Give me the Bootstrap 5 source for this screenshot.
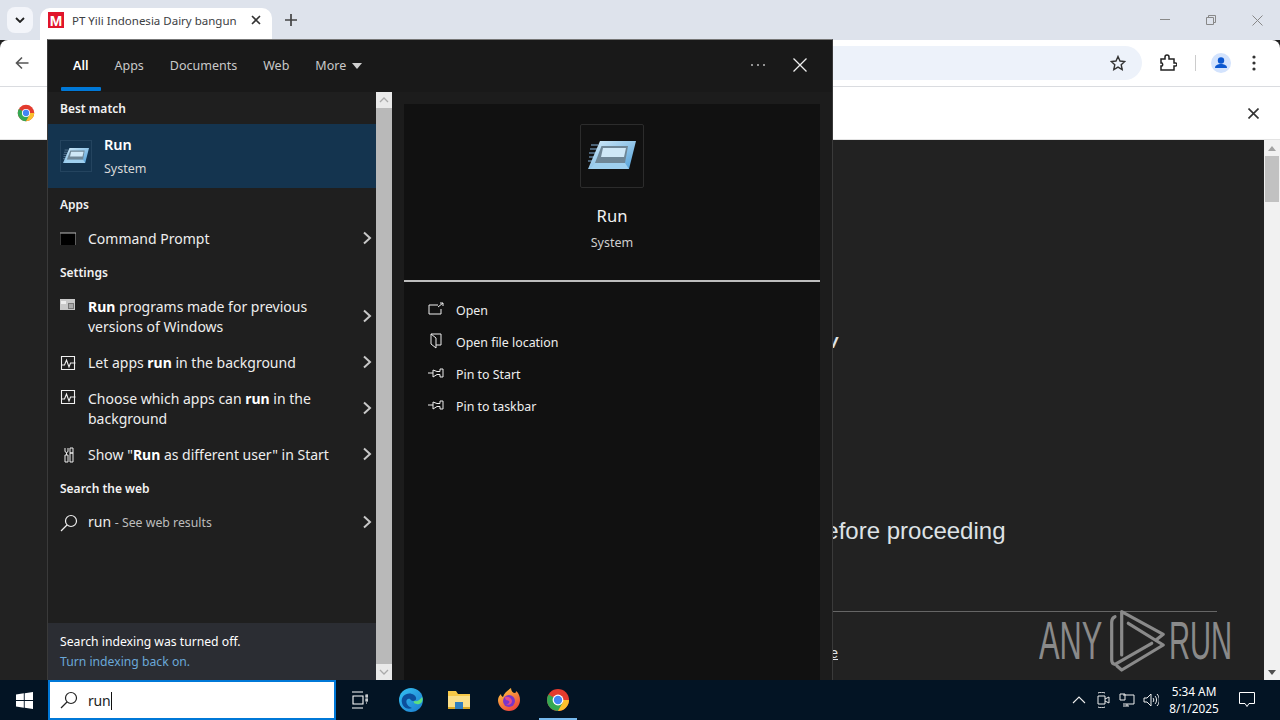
<!DOCTYPE html>
<html lang="en"><head><meta charset="utf-8"><title>Run</title>
<link href="https://cdn.jsdelivr.net/npm/bootstrap@5.3.0/dist/css/bootstrap.min.css" rel="stylesheet">
<style>
html,body{width:1280px;height:720px;overflow:hidden;margin:0}
body{font-family:"Noto Sans","Open Sans",sans-serif;background:#222;position:relative}
.desk{width:1280px;height:720px}
.tabstrip{height:40px;background:#dee3ec}
.tabbtn{width:26px;height:26px;margin:7px 0 0 7px;background:#f3f5fa;border-radius:8px}
.tabitem{width:232px;height:32px;margin:8px 0 0 7px;padding:0 11px 8px 8px;background:#fff;border-radius:10px 10px 0 0;font:11.5px "Noto Sans",sans-serif;color:#3c4043;white-space:nowrap}
.tabname{margin-left:8px}
.favm{width:16px;height:16px;background:#e0142b;color:#fff;font:700 15px/17px "Liberation Sans",sans-serif;text-align:center;flex:none}
.plus{margin:0 0 0 5px;width:28px}
.winctl{margin-left:auto;gap:0}
.winctl span{width:46px;height:40px}
.toolbar{height:47px;background:#fff;border-bottom:1px solid #dadce0;border-radius:8px 8px 0 0;padding-left:15px}
.addr{position:absolute;left:700px;top:46px;width:442px;height:34px;background:#edf2fa;border-radius:17px}
.tools{position:relative}
.infobar{height:53px;background:#fff;padding:0 21px 0 17px;border-bottom:1px solid #e3e3e3}
.pagearea{height:540px;background:#222;color:#dee2e6}
.pagemain{width:1264px;font-family:"Liberation Sans",sans-serif;position:relative}
.linew{position:absolute;left:822px;top:190px;font:italic 700 20px "Liberation Sans",sans-serif}
.lineb{position:absolute;left:812px;top:377px;font-size:24px;line-height:28px;white-space:nowrap}
.linehr{position:absolute;left:600px;right:47px;top:471px;height:1px;background:#666}
.linee{position:absolute;left:810px;top:503px;font-size:14px;text-decoration:underline}
.sbar{width:16px;background:#f1f1f1;position:relative}
.sthumb{position:absolute;left:1px;right:1px;top:16px;height:46px;background:#c1c1c1}
.sup,.sdn{position:absolute;left:4px;width:0;height:0;border-left:4px solid transparent;border-right:4px solid transparent}
.sup{top:6px;border-bottom:5px solid #a3a3a3}
.sdn{bottom:5px;border-top:5px solid #505050}
.wmark{position:absolute;left:1038px;top:610px;width:194px;height:62px;color:#8a8a8a}
.wmt{position:absolute;top:0;font:400 54px/60px "Liberation Sans",sans-serif;transform-origin:0 0}
.wma{left:1px;transform:scaleX(.57)}
.wmr{left:131px;transform:scaleX(.54)}
.panel{position:absolute;left:47px;top:39px;width:786px;height:641px;background:#1c1c1c;border:1px solid #3a3a3a;border-width:1px 1px 0 1px;border-top-color:#777;color:#fff}
.phead{height:52px;background:#191919}
.ptab{padding:0 13px;font-size:12.5px;color:#c9c9c9;position:relative;height:52px;line-height:52px}
.ptab.sel{color:#fff;font-weight:600}
.ptab.sel::after{content:"";position:absolute;left:1px;right:0;top:47px;height:4px;background:#0078d7;border-radius:1px}
.caretdn{display:inline-block;width:0;height:0;border-left:5.5px solid transparent;border-right:5.5px solid transparent;border-top:6px solid #d0d0d0;margin-left:6px;vertical-align:1px}
.pbody{height:588px}
.pleft{width:328px;height:588px;background:#1f1f1f;position:relative}
.shead{height:32px;line-height:33px;padding-left:12px;font-size:12px;font-weight:600;color:#f2f2f2}
.hit{height:64px;background:#14344f;padding-left:12px}
.hitbox{width:32px;height:32px;border:1px solid #24445f;flex:none}
.hittext{padding-top:2px}
.hitname{font-size:14.5px;font-weight:600;line-height:18px;margin-bottom:6px}
.hitsub{font-size:12.5px;line-height:20px;color:#d8d8d8}
.prow{padding-left:12px;color:#eee;font-size:14px;line-height:20px;position:relative}
.rowa{height:36px;padding-top:1px}.rowb{height:56px;padding-top:9px}
.picon{width:16px;height:16px;flex:none;margin-right:12px}
.picon2{width:18px;height:18px;flex:none;margin-right:10px}
.chev{position:absolute;right:3px;top:50%;margin-top:-7px;width:12px;height:14px}
.prow b{font-weight:700;color:#fff}
.sweb{font-size:12.3px;color:#bdbdbd}
.idx{position:absolute;left:0;right:0;bottom:0;height:57px;background:#2b2d33;padding:9px 12px;font-size:12.2px;line-height:20px}
.idx a{color:#6aa8d8;text-decoration:none}
.pscroll{width:16px;background:#b9b9b9;position:relative}
.pcap{position:absolute;left:0;right:0;height:16px;background:#e9e9e9}
.pright{width:440px;padding:12px 12px 0;background:#1c1c1c}
.prev{background:#111;height:576px}
.prevtop{height:176px;padding-top:20px}
.bigbox{width:64px;height:64px;border:1px solid #2c2c2c;border-radius:2px}
.bigname{font-size:16.6px;line-height:24px;margin-top:16px;color:#f2f2f2}
.bigsub{font-size:12.5px;line-height:18px;margin-top:6px;color:#cfcfcf}
.prevline{height:2px;background:#bdbdbd}
.menu{padding-top:13px}
.mrow{height:32px;padding-left:24px;font-size:12.4px;color:#eee}
.mrow svg{margin-right:12px;margin-top:-4px}
.taskbar{position:absolute;left:0;top:680px;width:1280px;height:40px;background:#031424;color:#fff}
.startb{width:48px}
.sbox{width:288px;height:40px;background:#fff;border:2px solid #0078d7;color:#222;font-size:14px;padding-left:10px;letter-spacing:-.2px}
.sicon{margin-right:10px}
.caretline{display:inline-block;width:1px;height:18px;background:#111;vertical-align:-4px}
.tbi{width:48px}
.tbi.on{position:relative}
.tbi.on::after{content:"";position:absolute;left:5px;right:5px;bottom:0;height:2px;background:#76b9ed}
.clock{width:62px;font-size:11.8px;line-height:17px;text-align:center}
svg{display:block}
</style></head><body>
<svg width="0" height="0" class="position-absolute">
<defs>
<linearGradient id="gr" x1="0" y1="0" x2="1" y2="1"><stop offset="0" stop-color="#d8eefa"/><stop offset="1" stop-color="#4f9fd8"/></linearGradient>
<symbol id="runi" viewBox="0 0 48 32">
<path d="M3 5h7M2 9h7M1 13h7M1 17h5M0 21h4" stroke="#5f7d98" stroke-width="1.600"/>
<path d="M12 1H48L41 29H0Z" fill="url(#gr)"/><path d="M13.500 6H40L37 23H7Z" fill="#6f8797"/><path d="M15 8H38L36 17H13Z" fill="#cfe8f7"/><path d="M7 23H37L41 29H2Z" fill="#9fd0ef"/>
</symbol>
<symbol id="chart" viewBox="0 0 16 16"><path d="M1.500 1.500h13v13h-13z M1.500 10h3l2-5 2.500 7 1.500-4h5" fill="none" stroke="#f0f0f0" stroke-width="1.100"/></symbol>
<symbol id="chevr" viewBox="0 0 12 14"><path d="M3 1.500 9 7 3 12.500" fill="none" stroke="#c8c8c8" stroke-width="2"/></symbol>
<symbol id="srch" viewBox="0 0 18 18"><circle cx="11" cy="7" r="5.500" fill="none" stroke="currentColor" stroke-width="1.200"/><path d="M7 11 1 17" stroke="currentColor" stroke-width="1.300"/></symbol>
<symbol id="pini" viewBox="0 0 16 12"><path d="M0 6h5M5 3v7M5 3l4 1.500h3V2h3v8h-3V7.500H9L5 10" fill="none" stroke="#eee" stroke-width="1"/></symbol>
<symbol id="chrm" viewBox="0 0 24 24"><circle cx="12" cy="12" r="11" fill="#e33b2e"/><path d="M12 12 2.500 6.500A11 11 0 0 0 12 23l5-8z" fill="#34a853"/><path d="M12 12H23A11 11 0 0 1 12 23l5-9z" fill="#fbc02d"/><circle cx="12" cy="12" r="5.400" fill="#fff"/><circle cx="12" cy="12" r="4.200" fill="#4285f4"/></symbol>
</defs></svg>

<div class="desk">
 <div class="tabstrip d-flex">
  <div class="tabbtn d-flex align-items-center justify-content-center"><svg width="10" height="6" viewBox="0 0 10 6"><path d="M1 1l4 4 4-4" fill="none" stroke="#222" stroke-width="1.800"/></svg></div>
  <div class="tabitem d-flex align-items-center"><span class="favm">M</span><span class="tabname">PT Yili Indonesia Dairy bangun</span><svg class="ms-auto" width="10" height="10" viewBox="0 0 10 10"><path d="M1 1l8 8M9 1l-8 8" stroke="#333" stroke-width="1.600"/></svg></div>
  <div class="plus d-flex align-items-center justify-content-center"><svg width="12" height="12" viewBox="0 0 12 12"><path d="M6 0v12M0 6h12" stroke="#444" stroke-width="1.700"/></svg></div>
  <div class="winctl d-flex">
   <span class="d-flex align-items-center justify-content-center"><svg width="10" height="2"><path d="M0 .5h10" stroke="#888"/></svg></span>
   <span class="d-flex align-items-center justify-content-center"><svg width="10" height="10" viewBox="0 0 10 10"><path d="M.5 2.500h7v7h-7zM2.500 2.500v-2h7v7h-2" fill="none" stroke="#888"/></svg></span>
   <span class="d-flex align-items-center justify-content-center"><svg width="11" height="11" viewBox="0 0 11 11"><path d="M.5.5l10 10M10.500.5l-10 10" stroke="#888"/></svg></span>
  </div>
 </div>
 <div class="toolbar d-flex align-items-center">
  <svg width="14" height="14" viewBox="0 0 14 14"><path d="M13.500 7H1.500M7 1.500 1.500 7 7 12.500" fill="none" stroke="#555" stroke-width="1.600"/></svg>
  <div class="addr"></div>
  <div class="tools ms-auto d-flex align-items-center">
   <svg width="16" height="16" viewBox="0 0 16 16" style="margin-right:33px"><path d="M8 1.500l2 4.500 4.800.5-3.600 3.200 1 4.800L8 12.100 3.800 14.500l1-4.800L1.200 6.500 6 6z" fill="none" stroke="#333" stroke-width="1.400"/></svg>
   <svg width="18" height="18" viewBox="0 0 18 18" style="margin-right:18px"><path d="M2 5h4V3a2 2 0 0 1 4 0v2h5v4h1.500a1.500 1.500 0 0 1 0 3H15v4H2v-4h1a2 2 0 0 0 0-3H2z" fill="none" stroke="#222" stroke-width="1.500"/></svg>
   <div style="width:1px;height:16px;background:#ccc;margin-right:15px"></div>
   <svg width="20" height="20" viewBox="0 0 20 20" style="margin-right:21px"><circle cx="10" cy="10" r="10" fill="#d3e3fd"/><circle cx="10" cy="7.500" r="3.200" fill="#0b57d0"/><path d="M4 15c0-3 3-4 6-4s6 1 6 4z" fill="#0b57d0"/></svg>
   <svg width="4" height="16" viewBox="0 0 4 16" style="margin-right:24px"><circle cx="2" cy="2" r="1.600" fill="#333"/><circle cx="2" cy="8" r="1.600" fill="#333"/><circle cx="2" cy="14" r="1.600" fill="#333"/></svg>
  </div>
 </div>
 <div class="infobar d-flex align-items-center justify-content-between">
  <svg width="18" height="18"><use href="#chrm"/></svg>
  <svg width="11" height="11" viewBox="0 0 11 11"><path d="M.5.500l10 10M10.500.500l-10 10" stroke="#333" stroke-width="1.600"/></svg>
 </div>
 <div class="pagearea d-flex">
  <div class="pagemain flex-grow-1">
   <div class="linew">w</div>
   <div class="lineb">before proceeding</div>
   <div class="linehr"></div>
   <div class="linee">here</div>
  </div>
  <div class="sbar"><i class="sup"></i><div class="sthumb"></div><i class="sdn"></i></div>
 </div>
</div>

<div class="wmark">
 <span class="wmt wma">ANY</span>
 <svg class="position-absolute" style="left:70px;top:0" width="62" height="62" viewBox="0 0 62 62"><g fill="none" stroke="currentColor" stroke-width="3.200" stroke-linejoin="round" stroke-linecap="round"><path d="M13.700 45V1.700L55.300 24.300 48 30"/><path d="M20.300 13.300 55.300 35 13.700 60 9 56"/><path d="M7 6.700Q3.700 8 3.700 12V50Q3.700 54 7 54.300L43.700 33.300"/></g></svg>
 <span class="wmt wmr">RUN</span>
</div>

<div class="panel">
 <div class="phead d-flex align-items-start">
  <div class="d-flex ps-0" style="margin-left:12px">
   <div class="ptab sel">All</div><div class="ptab">Apps</div><div class="ptab">Documents</div><div class="ptab">Web</div><div class="ptab">More<span class="caretdn"></span></div>
  </div>
  <div class="ms-auto d-flex align-items-center" style="height:50px">
   <svg width="16" height="4" viewBox="0 0 16 4" style="margin-right:27px"><circle cx="2" cy="2" r="1" fill="#bbb"/><circle cx="8" cy="2" r="1" fill="#bbb"/><circle cx="14" cy="2" r="1" fill="#bbb"/></svg>
   <svg width="14" height="14" viewBox="0 0 14 14" style="margin-right:25px"><path d="M.5.500l13 13M13.500.500l-13 13" stroke="#eee" stroke-width="1.300"/></svg>
  </div>
 </div>
 <div class="pbody d-flex">
  <div class="pleft">
   <div class="shead">Best match</div>
   <div class="hit d-flex align-items-center">
    <div class="hitbox d-flex align-items-center justify-content-center me-2 ms-0"><svg width="26" height="18"><use href="#runi"/></svg></div>
    <div class="ms-1 hittext"><div class="hitname">Run</div><div class="hitsub">System</div></div>
   </div>
   <div class="shead">Apps</div>
   <div class="prow rowa d-flex align-items-center"><svg class="picon" viewBox="0 0 16 16"><rect x="0" y="2" width="16" height="12" fill="#000"/><path d="M0 2h16v12" fill="none" stroke="#bbb"/><path d="M0 2v12" stroke="#777"/></svg><span>Command Prompt</span><svg class="chev"><use href="#chevr"/></svg></div>
   <div class="shead">Settings</div>
   <div class="prow rowb d-flex"><svg class="picon" viewBox="0 0 16 16"><rect y="2" width="15" height="11" fill="#c9c9c9"/><rect x="1" y="4" width="5" height="3" fill="#eee"/><rect x="8" y="6" width="6" height="6" fill="#777"/><path d="M9 8h4M9 10h4" stroke="#ddd"/></svg><span><b>Run</b> programs made for previous<br>versions of Windows</span><svg class="chev"><use href="#chevr"/></svg></div>
   <div class="prow rowa d-flex align-items-center"><svg class="picon"><use href="#chart"/></svg><span>Let apps <b>run</b> in the background</span><svg class="chev"><use href="#chevr"/></svg></div>
   <div class="prow rowb d-flex"><svg class="picon"><use href="#chart"/></svg><span>Choose which apps can <b>run</b> in the<br>background</span><svg class="chev"><use href="#chevr"/></svg></div>
   <div class="prow rowa d-flex align-items-center"><svg class="picon" viewBox="0 0 16 16"><path d="M5 1v3a1.500 1.500 0 0 0 3 0V1M6.500 5.500V8M5 8h3v7H5zM10 1h3v5h-3zM10 6h3v9h-3z" fill="none" stroke="#eee"/></svg><span>Show "<b>Run</b> as different user" in Start</span><svg class="chev"><use href="#chevr"/></svg></div>
   <div class="shead">Search the web</div>
   <div class="prow rowa d-flex align-items-center"><svg class="picon2"><use href="#srch"/></svg><span>run <span class="sweb">- See web results</span></span><svg class="chev"><use href="#chevr"/></svg></div>
   <div class="idx"><div>Search indexing was turned off.</div><a href="#">Turn indexing back on.</a></div>
  </div>
  <div class="pscroll">
   <div class="pcap top-0 d-flex align-items-center justify-content-center"><svg width="10" height="6" viewBox="0 0 10 6"><path d="M1 5l4-4 4 4" fill="none" stroke="#aaa" stroke-width="1.300"/></svg></div>
   <div class="pcap bottom-0 d-flex align-items-center justify-content-center"><svg width="10" height="6" viewBox="0 0 10 6"><path d="M1 1l4 4 4-4" fill="none" stroke="#aaa" stroke-width="1.300"/></svg></div>
  </div>
  <div class="pright">
   <div class="prev">
    <div class="prevtop d-flex flex-column align-items-center">
     <div class="bigbox d-flex align-items-center justify-content-center"><svg width="48" height="32"><use href="#runi"/></svg></div>
     <div class="bigname">Run</div><div class="bigsub">System</div>
    </div>
    <div class="prevline"></div>
    <div class="menu">
     <div class="mrow d-flex align-items-center"><svg width="16" height="14" viewBox="0 0 16 14"><path d="M10 3H1v9h12V7M10 5l5-4M12 1h3v3" fill="none" stroke="#eee"/></svg>Open</div>
     <div class="mrow d-flex align-items-center"><svg width="16" height="16" viewBox="0 0 16 16"><path d="M3 1h10v11H8M3 1v10l5 4V5z" fill="none" stroke="#eee"/></svg>Open file location</div>
     <div class="mrow d-flex align-items-center"><svg width="16" height="12"><use href="#pini"/></svg>Pin to Start</div>
     <div class="mrow d-flex align-items-center"><svg width="16" height="12"><use href="#pini"/></svg>Pin to taskbar</div>
    </div>
   </div>
  </div>
 </div>
</div>

<div class="taskbar d-flex align-items-center">
 <div class="startb d-flex align-items-center justify-content-center"><svg width="17" height="17" viewBox="0 0 17 17"><path d="M0 2.400 7.800 1.300V8H0zM8.700 1.200 17 0v8H8.700zM0 9h7.800v6.700L0 14.600zM8.700 9H17v8l-8.300-1.200z" fill="#fff"/></svg></div>
 <div class="sbox d-flex align-items-center"><svg width="18" height="18" class="sicon"><use href="#srch"/></svg><span>run<i class="caretline"></i></span></div>
 <div class="tbi d-flex justify-content-center"><svg width="16" height="18" viewBox="0 0 16 18"><path d="M0 1h11M0 17h11M1 5h10v8H1z M14 4h2v2h-2zM14 8h2v2h-2z M14 12h1" fill="none" stroke="#fff" stroke-width="1.100"/></svg></div>
 <div class="tbi d-flex justify-content-center" style="margin-left:3px"><svg width="24" height="24" viewBox="0 0 24 24"><defs><linearGradient id="ed" x1="0" y1="0" x2="1" y2="1"><stop offset="0" stop-color="#35c1f1"/><stop offset="1" stop-color="#1b7ccf"/></linearGradient></defs><circle cx="12" cy="12" r="12" fill="url(#ed)"/><path d="M3 15c-2-8 7-12 12-8 3 2 3 6-1 6-3 0-2-3-5-2-3 1-2 7 4 9-5 2-9-1-10-5z" fill="#0c4f9c"/><path d="M23 9c2 5-2 8-5 7-2 0-4-1-3-3 3 1 6-1 8-4z" fill="#5ee07f"/></svg></div>
 <div class="tbi d-flex justify-content-center"><svg width="24" height="22" viewBox="0 0 24 22"><path d="M1 2h8l2 3h12v15H1z" fill="#f7c948"/><path d="M1 7h22v13H1z" fill="#fbe08a"/><rect x="8" y="13" width="8" height="7" fill="#2f7fc1"/><rect x="1" y="18" width="7" height="2" fill="#d9a826"/><rect x="16" y="18" width="7" height="2" fill="#d9a826"/></svg></div>
 <div class="tbi d-flex justify-content-center" style="margin-left:2px"><svg width="24" height="26" viewBox="0 0 24 26"><defs><linearGradient id="ff" x1="0" y1="0" x2=".6" y2="1"><stop offset="0" stop-color="#ffd23c"/><stop offset="1" stop-color="#f0483e"/></linearGradient></defs><path d="M1 13c0-3 2-5 3-6 0 2 1 2 2 3 1-4 5-7 8-9 0 3 2 5 4 5 1 0 1-2 1-2 3 2 4 6 4 9a11 11 0 0 1-22 0z" fill="url(#ff)"/><circle cx="12" cy="14" r="6" fill="#7a35c9"/><path d="M8 10c3-1 7 1 7 4s-3 5-6 3c3 0 4-2 3-3s-4 0-4-4z" fill="#e64a8c"/></svg></div>
 <div class="tbi on d-flex justify-content-center align-items-center align-self-stretch" style="margin-left:1px"><svg width="24" height="24"><use href="#chrm"/></svg></div>
 <div class="ms-auto d-flex align-items-center">
  <svg width="14" height="8" viewBox="0 0 14 8" style="margin-right:10px"><path d="M1 7l6-6 6 6" fill="none" stroke="#eee" stroke-width="1.100"/></svg>
  <svg width="14" height="16" viewBox="0 0 14 16" style="margin-right:9px"><path d="M2 4h7v8H2zM9 7l4-2v6L9 9M2 1c2-1 5-1 7 0M2 15c2 1 5 1 7 0" fill="none" stroke="#eee"/></svg>
  <svg width="16" height="14" viewBox="0 0 16 14" style="margin-right:8px"><path d="M4 2h11v9H4M1 1h5v6H1zM4 13h6M8 11v2" fill="none" stroke="#eee"/></svg>
  <svg width="16" height="14" viewBox="0 0 16 14" style="margin-right:4px"><path d="M1 5h3l4-4v12L4 9H1zM10 5c1 1 1 3 0 4M12 3c2 2 2 6 0 8M14 1c3 3 3 9 0 12" fill="none" stroke="#eee"/></svg>
  <div class="clock"><div>5:34 AM</div><div>8/1/2025</div></div>
  <svg width="16" height="16" viewBox="0 0 16 16" style="margin:0 25px 0 14px"><path d="M.5.500h15v11H10l-2 3-2-3H.5z" fill="none" stroke="#fff"/></svg>
 </div>
</div>
</body></html>
